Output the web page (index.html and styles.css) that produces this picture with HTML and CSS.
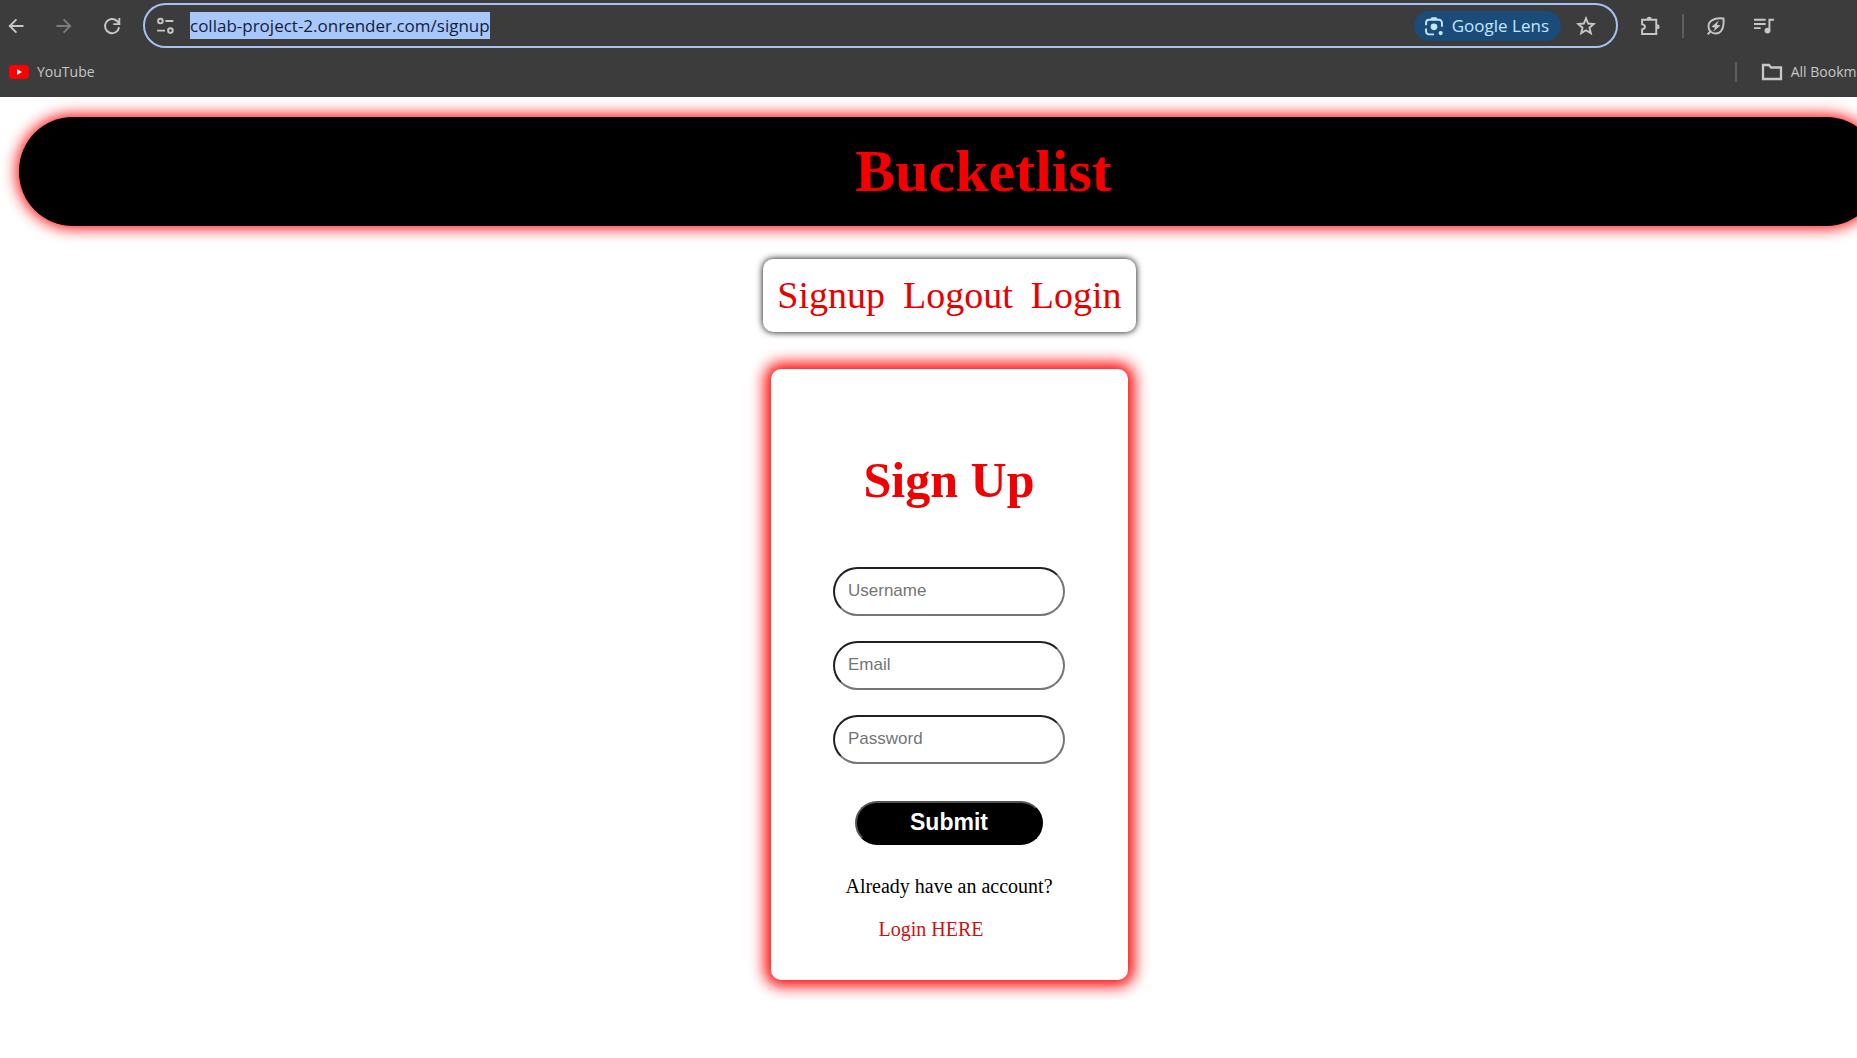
FILE: index.html
```html
<!DOCTYPE html>
<html lang="en">
<head>
<meta charset="utf-8">
<title>Bucketlist - Sign Up</title>
<link rel="stylesheet" href="styles.css">
</head>
<body>
<div class="browser">
  <div class="toolbar">
    <button class="tool" aria-label="Back"><svg viewBox="0 0 24 24"><path d="M21 12H5M12.500 4 4.500 12l8 8"/></svg></button>
    <button class="tool tool-off" aria-label="Forward"><svg viewBox="0 0 24 24"><path d="M3 12h16M11.500 4 19.500 12l-8 8"/></svg></button>
    <button class="tool" aria-label="Reload"><svg viewBox="0 0 24 24"><path d="M20.500 13.500A8.500 8.500 0 1 1 18 6L20.500 9M20.800 2.500v7.200h-7.200"/></svg></button>
    <div class="omnibox">
      <button class="tool" aria-label="Site information"><svg viewBox="0 0 24 24"><circle cx="6.500" cy="6" r="2.800"/><path d="M12.500 6H22M2.500 17.500H12"/><circle cx="18.500" cy="17.500" r="2.800"/></svg></button>
      <input class="url" type="text" aria-label="Address" value="collab-project-2.onrender.com/signup">
      <button class="lens"><svg viewBox="0 0 24 24"><path d="M2.500 11V8A3.500 3.500 0 0 1 6 4.500H18A3.500 3.500 0 0 1 21.500 8V13M2.500 15v3.500A3.500 3.500 0 0 0 6 22H12"/><path class="solid" d="M7.500 4.500 9 1.500h6l1.500 3z"/><circle class="solid" cx="12" cy="13" r="4"/><circle class="solid" cx="20" cy="20.500" r="2.500"/></svg>Google Lens</button>
      <button class="tool" aria-label="Bookmark this page"><svg viewBox="0 0 24 24"><path d="m12 2.800 2.600 6.200 6.700.6-5.100 4.400 1.600 6.600-5.800-3.500-5.800 3.500L7.800 14 2.700 9.600 9.400 9z"/></svg></button>
    </div>
    <div class="actions">
      <button class="tool" aria-label="Extensions"><svg viewBox="0 0 24 24"><path d="M2.500 4.500h17V21.500h-17v-5.500c4.500-.4 4.500-5.600 0-6z"/><path class="solid" d="M8 4a3 3 0 0 1 6 0zM20.500 10a3 3 0 0 1 0 6z"/></svg></button>
      <span class="divider"></span>
      <button class="tool" aria-label="Energy saver"><svg viewBox="0 0 24 24"><path d="M21 3C9 1.500 3 6.500 3 12.500c0 4.500 3.500 8.500 8.500 8.500 6.500 0 10.500-6 9.500-18zM6 18l-4 4"/><path class="solid" d="m15.500 5.500-9 7.500 4.400 1-2.400 5 9-7.500-4.400-1z"/></svg></button>
      <button class="tool" aria-label="Media controls"><svg viewBox="0 0 24 24"><path d="M0 4.500h14M0 9.500h14M0 14.500h8M18.500 17.500V4.500H24"/><circle class="solid" cx="16.200" cy="17.500" r="3.500"/></svg></button>
    </div>
  </div>
  <div class="bookmarks">
    <a class="bookmark" href="#"><svg class="youtube" viewBox="0 0 20 14"><rect width="20" height="14" rx="4" fill="#f00"/><path d="M8 4v6l5-3z" fill="#fff"/></svg>YouTube</a>
    <div class="all">
      <span class="divider"></span>
      <a class="bookmark" href="#"><svg class="folder" viewBox="0 0 22 18"><path d="M2 2h6l2 2.500h10V16H2z"/></svg>All Bookmarks</a>
    </div>
  </div>
</div>
<div class="page">
  <header class="banner"><h1>Bucketlist</h1></header>
  <nav class="nav">
    <a href="#">Signup</a>
    <a href="#">Logout</a>
    <a href="#">Login</a>
  </nav>
  <main class="card">
    <h2>Sign Up</h2>
    <form class="form">
      <input class="field" type="text" placeholder="Username" aria-label="Username">
      <input class="field" type="email" placeholder="Email" aria-label="Email">
      <input class="field" type="password" placeholder="Password" aria-label="Password">
      <button class="submit" type="submit">Submit</button>
    </form>
    <p class="question">Already have an account?</p>
    <a class="login" href="#">Login HERE</a>
  </main>
</div>
</body>
</html>
```
FILE: styles.css
```css
* {
  box-sizing: border-box;
}

body {
  margin: 0;
  background: #fff;
  font-family: "Liberation Serif", serif;
  overflow: hidden;
}

/* Browser bar */
.browser {
  height: 97px;
  background: #3c3c3c;
  color: #c7c7c7;
  font-family: "Open Sans", "Noto Sans", sans-serif;
}

.browser button {
  border: 0;
  padding: 0;
  background: none;
  color: inherit;
  font-family: inherit;
}

.browser svg {
  flex: none;
  fill: none;
  stroke: currentColor;
  stroke-width: 2.3;
}

.browser .solid {
  fill: currentColor;
  stroke: none;
}

.toolbar {
  display: flex;
  align-items: center;
  gap: 28px;
  padding: 3px 83px 0 6px;
}

.tool {
  display: flex;
  flex: none;
}

.tool svg,
.lens svg {
  width: 20px;
  height: 20px;
}

.browser .tool-off {
  color: #7c7c7c;
}

.omnibox {
  flex: 1;
  display: flex;
  align-items: center;
  height: 45px;
  margin-left: -7px;
  padding: 0 20px 0 10px;
  border: 2px solid #a8c0f5;
  border-radius: 24px;
}

.url {
  field-sizing: content;
  height: 27px;
  margin: 0 auto 0 15px;
  padding: 0;
  border: 0;
  background: #a8c7fa;
  color: #14203a;
  font-family: inherit;
  font-size: 17px;
}

.browser .lens {
  display: flex;
  align-items: center;
  gap: 8px;
  height: 30px;
  margin-right: 15px;
  padding: 0 12px 0 10px;
  border-radius: 15px;
  background: #1b4b78;
  color: #c2e7ff;
  font-size: 17px;
}

.actions {
  display: flex;
  align-items: center;
  gap: 22px;
  margin-left: -6px;
}

.actions .tool:last-child {
  margin-left: 6px;
}

.divider {
  width: 2px;
  height: 24px;
  background: #5e5e5e;
}

.bookmarks {
  display: flex;
  justify-content: space-between;
  align-items: center;
  height: 47px;
  padding-left: 9px;
  overflow: hidden;
}

.bookmark {
  display: flex;
  align-items: center;
  gap: 8px;
  color: inherit;
  font-size: 14px;
  text-decoration: none;
  white-space: nowrap;
}

.browser .youtube {
  width: 20px;
  stroke: none;
}

.folder {
  width: 22px;
}

.all {
  display: flex;
  align-items: center;
  gap: 24px;
  margin-right: -27px;
}

.all .divider {
  height: 20px;
}

/* Site: a little wider than the window */
.page {
  width: calc(100% + 42px);
  padding: 20px 19px;
}

.banner {
  padding: 20px 0 20px 68px;
  border-radius: 54px;
  background: #000;
  box-shadow: 0 0 15px 2px #f00;
  color: #f50000;
  text-align: center;
}

.banner h1 {
  margin: 0;
  font-size: 60px;
  line-height: 69px;
}

.nav {
  display: flex;
  justify-content: center;
  gap: 18px;
  width: fit-content;
  margin: 33px auto 37px;
  padding: 15px 14px;
  border-radius: 10px;
  box-shadow: 0 0 7px #000;
  font-size: 38px;
  line-height: 43px;
}

.nav a {
  color: #e80000;
  text-decoration: none;
}

.card {
  display: flex;
  flex-direction: column;
  align-items: center;
  width: 357px;
  margin: 0 auto;
  padding: 82px 63px 39px 62px;
  border-radius: 10px;
  box-shadow: 0 0 15px 6px #f00;
  font-size: 20px;
  line-height: 23px;
}

.card h2 {
  margin: 0 0 58px;
  color: #f00000;
  font-size: 50px;
  line-height: 58px;
}

.form {
  display: flex;
  flex-direction: column;
  align-items: center;
}

.field {
  width: 232px;
  height: 49px;
  margin-bottom: 25px;
  padding: 0 13px 2px;
  border: 2px inset #767676;
  border-radius: 25px;
  background: #fff;
  font-family: "Liberation Sans", sans-serif;
  font-size: 17px;
}

.field::placeholder {
  color: #757575;
}

.submit {
  width: 188px;
  height: 44px;
  margin-top: 12px;
  padding: 0 0 2px;
  border: 2px outset #000;
  border-radius: 22px;
  background: #000;
  color: #fff;
  font-family: "Liberation Sans", sans-serif;
  font-size: 23px;
  font-weight: bold;
}

.question {
  margin: 30px 0 20px;
}

.login {
  padding-right: 36px;
  color: #d01010;
  text-decoration: none;
}
```
